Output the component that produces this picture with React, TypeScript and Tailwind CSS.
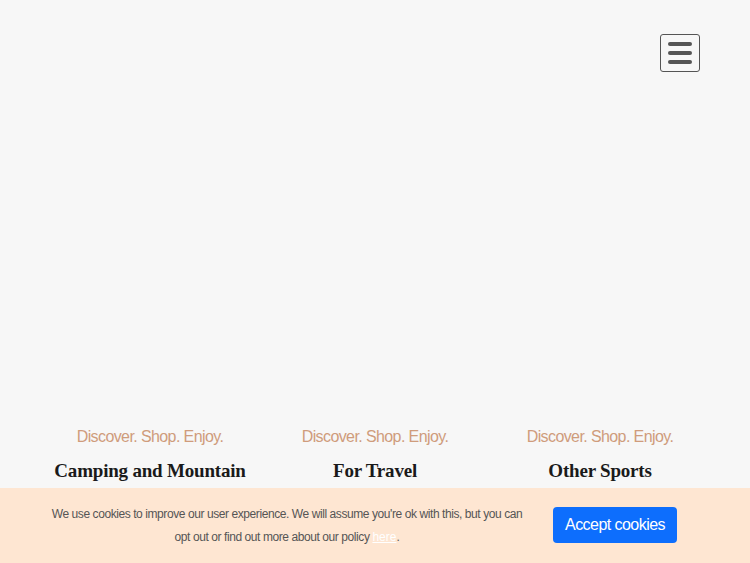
import React from "react";

const cols = ["Camping and Mountain", "For Travel", "Other Sports"];

export default function App() {
  return (
    <div className="relative w-[750px] h-[563px] overflow-hidden bg-[#f7f7f7]" style={{ fontFamily: '"Liberation Sans", Arial, sans-serif' }}>
      <div className="flex justify-end pt-[34px] pr-[50px]">
        <button className="w-[40px] h-[38px] border border-[#555] rounded-[3px] flex flex-col items-center justify-center gap-[5px]">
          <span className="block w-[24px] h-[4px] rounded-full bg-[#555]" />
          <span className="block w-[24px] h-[4px] rounded-full bg-[#555]" />
          <span className="block w-[24px] h-[4px] rounded-full bg-[#555]" />
        </button>
      </div>
      <div className="mx-auto w-[675px] grid grid-cols-3 mt-[355px]">
        {cols.map((c) => (
          <div key={c} className="flex flex-col items-center">
            <div className="text-[16px] leading-[20px] text-[#cf9c7c] tracking-[-0.6px]">Discover. Shop. Enjoy.</div>
            <div className="mt-[12px] text-[19px] leading-[24px] font-bold text-[#1a1a1a] tracking-[-0.2px]" style={{ fontFamily: '"Liberation Serif", "Times New Roman", serif' }}>{c}</div>
          </div>
        ))}
      </div>
      <div className="absolute left-0 right-0 bottom-0 h-[75px] bg-[#fee6d2] flex items-center pl-[48px] pb-[2px] gap-[27px]">
        <p className="w-[478px] pt-[2px] text-center text-[12px] leading-[23px] text-[#555] tracking-[-0.42px]">
          We use cookies to improve our user experience. We will assume you're ok with this, but you can opt out or find out more about our policy <a className="text-white underline tracking-normal">here</a>.
        </p>
        <button className="w-[124px] h-[36px] rounded-[4px] bg-[#0d6efd] text-white text-[16px] tracking-[-0.55px]">Accept cookies</button>
      </div>
    </div>
  );
}
